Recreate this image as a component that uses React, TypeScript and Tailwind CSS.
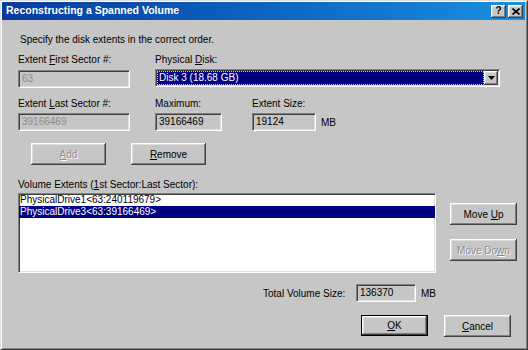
import type { ReactNode } from "react";

// classic win2000 bevels
const sunken =
  "border border-t-[#808080] border-l-[#808080] border-b-white border-r-white shadow-[inset_1px_1px_0_#404040,inset_-1px_-1px_0_#dfdfdf]";
const raised =
  "shadow-[inset_-1px_-1px_0_#404040,inset_1px_1px_0_#ffffff,inset_-2px_-2px_0_#808080,inset_2px_2px_0_#dfdfdf]";

function U({ children }: { children: ReactNode }) {
  return <span className="underline underline-offset-[1px]">{children}</span>;
}

function Label({ children }: { children: ReactNode }) {
  return <div className="h-[13px] leading-[13px] whitespace-nowrap">{children}</div>;
}

function Field({ children, w, disabled }: { children: ReactNode; w: string; disabled?: boolean }) {
  return (
    <div
      className={`${sunken} ${w} h-[18px] bg-[#c6c6c6] pl-[3px] leading-[15px] ${
        disabled ? "text-[#8a8a8a]" : "text-black"
      }`}
    >
      {children}
    </div>
  );
}

function Btn({
  children,
  w,
  disabled,
  def,
}: {
  children: ReactNode;
  w: string;
  disabled?: boolean;
  def?: boolean;
}) {
  return (
    <div className={`${w} ${def ? "h-[21px] border border-black" : "h-[22px]"} bg-[#c6c6c6]`}>
      <div
        className={`${raised} h-full w-full flex items-center justify-center ${
          disabled ? "text-[#8a8a8a] [text-shadow:1px_1px_0_#ffffff]" : "text-black"
        }`}
      >
        <span className="whitespace-nowrap">{children}</span>
      </div>
    </div>
  );
}

function Combo() {
  return (
    <div className={`${sunken} w-[345px] h-[18px] bg-white flex items-stretch p-[1px]`}>
      <div className="flex-1 bg-[#000080] text-white leading-[12px] pl-[1px] border border-dotted border-[#d8d890]">
        Disk 3 (18.68 GB)
      </div>
      <div className={`${raised} w-[14px] bg-[#c6c6c6] flex items-center justify-center`}>
        <svg width="7" height="4" viewBox="0 0 7 4">
          <path d="M0 0h7L3.5 4z" fill="#000" />
        </svg>
      </div>
    </div>
  );
}

export default function App() {
  return (
    <div className="w-[528px] h-[350px] bg-[#c6c6c6] text-[10px] text-black [font-family:'Liberation_Sans',Arial,sans-serif] border border-t-[#dfdfdf] border-l-[#dfdfdf] border-r-[#404040] border-b-[#404040] shadow-[inset_1px_1px_0_#ffffff,inset_-1px_-1px_0_#808080] p-[1px] pr-[2px] overflow-hidden">
      {/* title bar */}
      <div className="h-[18px] bg-linear-to-r from-[#0a3a9e] to-[#1b8fe0] flex items-center justify-between pl-[4px] pr-[2px]">
        <span className="text-white font-bold text-[10.5px]">Reconstructing a Spanned Volume</span>
        <div className="flex gap-[2px]">
          <div className={`${raised} w-[15px] h-[13px] bg-[#c6c6c6] flex items-center justify-center font-bold text-[10px] leading-none`}>
            ?
          </div>
          <div className={`${raised} w-[15px] h-[13px] bg-[#c6c6c6] flex items-center justify-center`}>
            <svg width="8" height="7" viewBox="0 0 8 7">
              <path d="M0.5 0.5l7 6M7.5 0.5l-7 6" stroke="#000" strokeWidth="1.6" />
            </svg>
          </div>
        </div>
      </div>

      <div className="pl-[16px]">
        <div className="mt-[13px] pl-[2px]">
          <Label>Specify the disk extents in the correct order.</Label>
        </div>

        <div className="mt-[7px] flex">
          <div className="w-[137px]">
            <Label>
              Extent <U>F</U>irst Sector #:
            </Label>
            <div className="mt-[4px]">
              <Field w="w-[112px]" disabled>
                63
              </Field>
            </div>
          </div>
          <div>
            <Label>
              Physical <U>D</U>isk:
            </Label>
            <div className="mt-[3px]">
              <Combo />
            </div>
          </div>
        </div>

        <div className="mt-[9px] flex">
          <div className="w-[137px]">
            <Label>
              Extent <U>L</U>ast Sector #:
            </Label>
            <div className="mt-[3px]">
              <Field w="w-[112px]" disabled>
                39166469
              </Field>
            </div>
          </div>
          <div className="w-[97px]">
            <Label>Maximum:</Label>
            <div className="mt-[3px]">
              <Field w="w-[67px]">39166469</Field>
            </div>
          </div>
          <div>
            <Label>Extent Size:</Label>
            <div className="mt-[3px] flex items-center gap-[5px]">
              <Field w="w-[64px]">19124</Field>
              <span>MB</span>
            </div>
          </div>
        </div>

        <div className="mt-[12px] pl-[13px] flex gap-[25px]">
          <Btn w="w-[75px]" disabled>
            <U>A</U>dd
          </Btn>
          <Btn w="w-[75px]">
            <U>R</U>emove
          </Btn>
        </div>

        <div className="mt-[13px]">
          <Label>
            Volume Extents (<U>1</U>st Sector:Last Sector):
          </Label>
        </div>

        <div className="mt-[2px] flex">
          <div className={`${sunken} w-[418px] h-[80px] bg-white`}>
            <div className="h-[12px] leading-[12px] pl-[1px]">PhysicalDrive1&lt;63:240119679&gt;</div>
            <div className="h-[12px] leading-[12px] pl-[1px] bg-[#000080] text-white">
              PhysicalDrive3&lt;63:39166469&gt;
            </div>
          </div>
          <div className="ml-[14px] pt-[10px] flex flex-col gap-[14px]">
            <Btn w="w-[67px]">
              Move <U>U</U>p
            </Btn>
            <Btn w="w-[67px]" disabled>
              Move Do<U>w</U>n
            </Btn>
          </div>
        </div>

        <div className="mt-[11px] flex items-center pl-[245px]">
          <span className="w-[93px] whitespace-nowrap">Total Volume Size:</span>
          <Field w="w-[60px]">136370</Field>
          <span className="ml-[5px]">MB</span>
        </div>

        <div className="mt-[13px] flex pl-[343px] gap-[16px]">
          <Btn w="w-[67px]" def>
            <U>O</U>K
          </Btn>
          <Btn w="w-[67px]">
            <U>C</U>ancel
          </Btn>
        </div>
      </div>
    </div>
  );
}
